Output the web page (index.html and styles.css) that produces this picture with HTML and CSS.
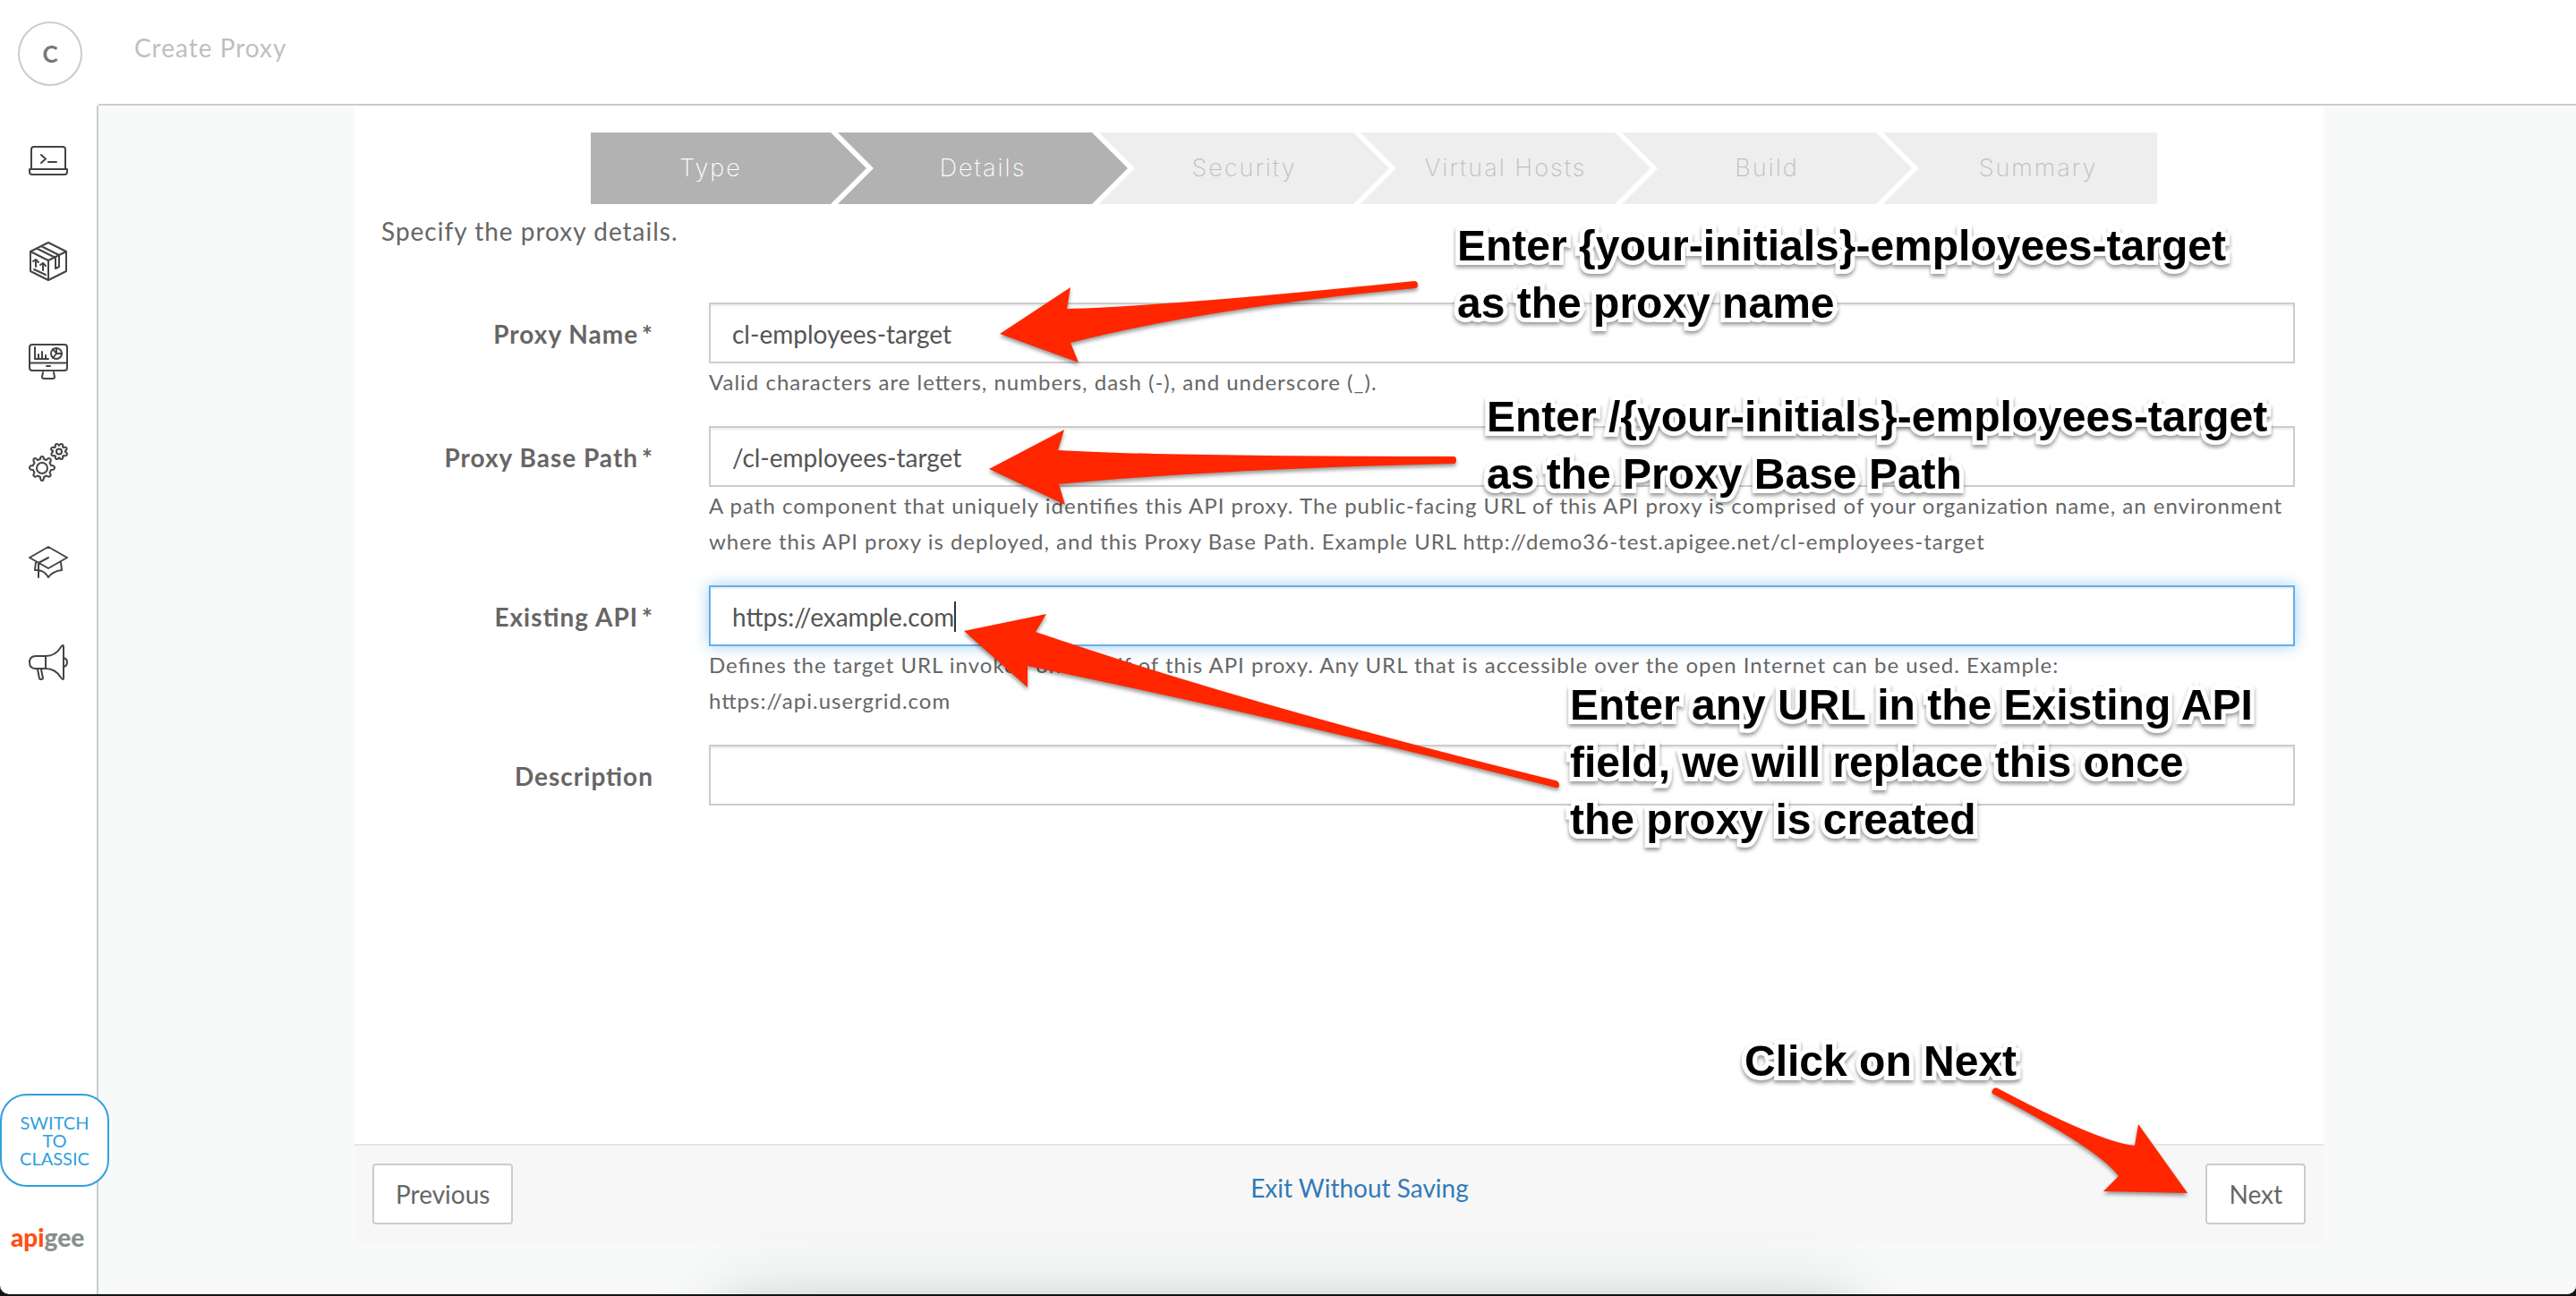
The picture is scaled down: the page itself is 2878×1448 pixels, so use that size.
FILE: index.html
```html
<!DOCTYPE html>
<html lang="en">
<head>
<meta charset="utf-8">
<title>Create Proxy</title>
<link rel="stylesheet" href="styles.css">
</head>
<body>
<div class="app">
  <header class="topbar">
    <div class="topbar-account"><button class="avatar" type="button">C</button></div>
    <h1 class="topbar-title">Create Proxy</h1>
  </header>

  <nav class="sidebar" aria-label="Main">
    <ul class="nav-list">
      <li><a class="nav-link" href="#develop" aria-label="Develop">
        <svg class="icon" viewBox="0 0 44 44"><path d="M3 31V9q0-3 3-3h32q3 0 3 3v22M1 31h42v3q0 3-3 3H4q-3 0-3-3z"/><path d="M14 15l5 4.500-5 4.500M22 23h9"/></svg>
      </a></li>
      <li><a class="nav-link" href="#publish" aria-label="Publish">
        <svg class="icon" viewBox="0 0 44 44"><path d="M22 1l20 10v22L22 43 2 33V11zM2 11l20 10 20-10M22 21v22M9 7.500l20 10M14 5l20 10M30 17v13l4-2V15"/><path d="M8 28v-8M5 22l3-2 3 3M16 32v-8M13 26l3-2 3 3M6 31l13 6"/></svg>
      </a></li>
      <li><a class="nav-link" href="#analyze" aria-label="Analyze">
        <svg class="icon" viewBox="0 0 44 44"><rect x="1" y="3" width="42" height="29" rx="3"/><path d="M1 23.500h42M20 27h4M16 34l-1 5q0 2 2 2h10q2 0 2-2l-1-5"/><path d="M7 6v13h15M11 19v-5M15 19v-8M19 19v-4"/><circle cx="31" cy="13" r="6"/><path d="M31 7v6h6M31 13l-4 5M31 13l-4-5"/></svg>
      </a></li>
      <li><a class="nav-link" href="#admin" aria-label="Admin">
        <svg class="icon" viewBox="0 0 44 44"><path d="M13 19q0-3 2-3t2 3l3 1q2-3 4-1.500t-.5 4.500l1.500 3q4 0 4 2.500t-4 2.500l-1.500 3q2 2.500.5 4t-4-.5l-3 1.500q0 4-2 4t-2-4l-3-1.500q-2.500 2-4 .5t.5-4L5 31q-4 0-4-2.500T5 26l1.500-3q-2-3-.5-4.500t4 1.500z"/><circle cx="15" cy="29" r="6"/><path d="M30 5q-1-2 .8-2.800t2.700 1.300h1q1-2.200 2.700-1.300T38 5l1 1q3-1 3.500 1T41 9.500v1.500q2.500 1 1.800 3T39 15l-1 1q1 2-.8 2.800t-2.700-1.300h-1q-1 2.200-2.700 1.300T30 16l-1-1q-3 1-3.500-1T27 11V9.500q-2.500-.5-1.800-2.500T29 6z"/><circle cx="34" cy="10.500" r="3"/></svg>
      </a></li>
      <li><a class="nav-link" href="#learn" aria-label="Learn">
        <svg class="icon" viewBox="0 0 44 44"><path d="M22 5l21 12-21 12L1 17zM22 17l-11 6v16M8 22l-1 9h3M11 31q7 1 11 8 5-7 15-8l-1-9"/></svg>
      </a></li>
      <li><a class="nav-link" href="#news" aria-label="Announcements">
        <svg class="icon" viewBox="0 0 44 44"><path d="M19 15H8q-7 0-7 7t7 7h11q11 0 17 10 3 4 3 0V5q0-4-3 0-6 10-17 10zM19 15v14M39 17q4 1 4 5t-4 5M10 30l2 10q0 1 1.500 1t2.500-1l-2-10"/></svg>
      </a></li>
    </ul>
    <div class="sidebar-foot">
      <button class="classic" type="button">SWITCH TO CLASSIC</button>
      <a class="logo" href="#home"><span class="logo-api">api</span>gee</a>
    </div>
  </nav>

  <main class="content">
    <section class="panel">
      <div class="panel-body">
        <ol class="steps">
          <li class="step step-first step-done">Type</li>
          <li class="step step-done">Details</li>
          <li class="step">Security</li>
          <li class="step">Virtual Hosts</li>
          <li class="step">Build</li>
          <li class="step step-last">Summary</li>
        </ol>
        <p class="intro">Specify the proxy details.</p>
        <form class="fields" id="proxy-form">
          <div class="row">
            <label class="label" for="name">Proxy Name<span class="star">*</span></label>
            <div class="control">
              <input class="input" id="name" type="text" value="cl-employees-target">
              <p class="help">Valid characters are letters, numbers, dash (-), and underscore (_).</p>
            </div>
          </div>
          <div class="row">
            <label class="label" for="path">Proxy Base Path<span class="star">*</span></label>
            <div class="control">
              <input class="input" id="path" type="text" value="/cl-employees-target">
              <p class="help">A path component that uniquely identifies this API proxy. The public-facing URL of this API proxy is comprised of your organization name, an environment where this API proxy is deployed, and this Proxy Base Path. Example URL http://demo36-test.apigee.net/cl-employees-target</p>
            </div>
          </div>
          <div class="row">
            <label class="label" for="target">Existing API<span class="star">*</span></label>
            <div class="control">
              <input class="input input-active" id="target" type="text" value="https://example.com">
              <span class="caret"></span>
              <p class="help">Defines the target URL invoked on behalf of this API proxy. Any URL that is accessible over the open Internet can be used. Example: https://api.usergrid.com</p>
            </div>
          </div>
          <div class="row">
            <label class="label" for="description">Description</label>
            <div class="control">
              <input class="input" id="description" type="text" value="">
            </div>
          </div>
        </form>
      </div>
      <footer class="panel-foot">
        <button class="btn" type="button">Previous</button>
        <a class="exit" href="#exit">Exit Without Saving</a>
        <button class="btn" type="submit" form="proxy-form">Next</button>
      </footer>

      <svg class="arrows" viewBox="396 118 2200 1270" aria-hidden="true">
        <path d="M1117 373L1196 321 1192 345Q1320 341 1580 314Q1584 314 1584 318T1581 322Q1350 344 1196 383L1205 405z"/>
        <path d="M1105 524L1189 480 1182 503Q1300 510 1624 510Q1627 510 1627 514T1624 518Q1360 524 1183 541L1190 564z"/>
        <path d="M1077 705L1169 686 1157 706Q1410 792 1738 872Q1742 873 1742 877T1738 880Q1430 802 1148 744L1148 768z"/>
        <path d="M2444 1333L2389 1256 2385 1280Q2345 1276 2232 1216Q2228 1214 2226 1218T2228 1223Q2345 1284 2367 1314L2350 1331z"/>
      </svg>
      <p class="note note-name">Enter {your-initials}-employees-target<br>as the proxy name</p>
      <p class="note note-path">Enter /{your-initials}-employees-target<br>as the Proxy Base Path</p>
      <p class="note note-target">Enter any URL in the Existing API<br>field, we will replace this once<br>the proxy is created</p>
      <p class="note note-next">Click on Next</p>
    </section>
  </main>
  <div class="dock-shadow"></div>
</div>
</body>
</html>
```
FILE: styles.css
```css
* { box-sizing: border-box; }

body {
  margin: 0;
  background: #141416;
  color: #666;
  font: 28px/40px Lato, "Open Sans", sans-serif;
  font-feature-settings: "liga";
}

h1, p, ol, ul { margin: 0; padding: 0; }
ol, ul { list-style: none; }
a { text-decoration: none; }
button, input { font: inherit; color: inherit; }

.app {
  position: relative;
  display: grid;
  grid-template: auto 1fr / 110px 1fr;
  min-height: calc(100vh - 2px);
  margin-bottom: 2px;
  background: #fff;
  border-radius: 0 0 10px 10px;
  overflow: hidden;
}

/* top bar */
.topbar {
  grid-column: 1 / 3;
  display: grid;
  grid-template-columns: subgrid;
  height: 118px;
}
.topbar-account { padding: 24px 0 0 20px; }
.avatar {
  display: block;
  width: 72px;
  height: 72px;
  padding: 0;
  border: 2px solid #ccc;
  border-radius: 50%;
  background: #fff;
  color: #777;
  font-size: 26px;
  font-weight: 700;
}
.topbar-title {
  padding: 33px 0 0 40px;
  border-bottom: 2px solid #ccc;
  color: #bfbfbf;
  font-size: 28px;
  font-weight: 400;
  letter-spacing: 1px;
}

/* sidebar */
.sidebar {
  display: flex;
  flex-direction: column;
  justify-content: space-between;
  padding: 40px 0 38px;
  border-right: 2px solid #c9cccb;
}
.nav-list {
  display: grid;
  gap: 68px;
  justify-items: center;
}
.nav-link { display: block; }
.icon {
  display: block;
  width: 44px;
  height: 44px;
  fill: none;
  stroke: #444;
  stroke-width: 2;
  stroke-linejoin: round;
  stroke-linecap: round;
}
.sidebar-foot {
  position: relative;
  z-index: 1;
  display: grid;
  gap: 30px;
}
.classic {
  width: 122px;
  height: 104px;
  padding: 0 18px;
  border: 2px solid #2f9fdc;
  border-radius: 30px;
  background: #fff;
  color: #2f9fdc;
  font-size: 20px;
  line-height: 20px;
}
.logo {
  padding-left: 12px;
  color: #8a8f8d;
  font: 900 28px/52px Lato, sans-serif;
}
.logo-api { color: #ff4f12; }

/* wizard panel */
.content {
  display: flex;
  justify-content: center;
  padding: 0 0 58px 4px;
  background: #f8faf9;
}
.panel {
  position: relative;
  display: flex;
  flex-direction: column;
  width: 100%;
  max-width: 2200px;
  background: #fff;
}
.panel-body {
  flex: 1;
  padding: 30px 32px 60px 30px;
}
.steps {
  display: grid;
  grid-template-columns: 276fr repeat(4, 292fr) 306fr;
  margin: 0 154px 0 234px;
}
.step {
  height: 80px;
  margin-right: -32px;
  background: #eee;
  clip-path: polygon(0 0, calc(100% - 40px) 0, 100% 50%, calc(100% - 40px) 100%, 0 100%, 40px 50%);
  color: #bebebe;
  font: 200 27px/80px Inter, "Liberation Sans", sans-serif;
  letter-spacing: 2px;
  text-align: center;
}
.step-done {
  background: #b2b2b2;
  color: #fff;
}
.step-first {
  padding-right: 40px;
  clip-path: polygon(0 0, calc(100% - 40px) 0, 100% 50%, calc(100% - 40px) 100%, 0 100%);
}
.step-last {
  margin-right: 0;
  padding-left: 40px;
  clip-path: polygon(0 0, 100% 0, 100% 100%, 0 100%, 40px 50%);
}
.intro {
  margin: 10px 0 60px;
  letter-spacing: 1px;
}

/* form */
.fields {
  display: grid;
  gap: 30px;
}
.row {
  display: grid;
  grid-template-columns: 304px 1fr;
  gap: 62px;
}
.label {
  padding-top: 15px;
  font-weight: 700;
  letter-spacing: 1px;
  text-align: right;
}
.star { margin-left: 4px; }
.control { position: relative; }
.input {
  display: block;
  width: 100%;
  height: 68px;
  padding: 2px 24px 0;
  border: 2px solid #ccc;
  border-radius: 0;
  outline: 0;
  background: #fff;
  box-shadow: inset 0 2px 2px rgba(0, 0, 0, .075);
  color: #555;
}
.input-active {
  border-color: #66afe9;
  box-shadow: inset 0 2px 2px rgba(0, 0, 0, .075), 0 0 16px rgba(102, 175, 233, .6);
}
.caret {
  position: absolute;
  top: 18px;
  left: 274px;
  width: 2px;
  height: 34px;
  background: #333;
}
.help {
  margin: 1px 0 -1px;
  font-size: 24px;
  letter-spacing: 1px;
}

/* panel footer */
.panel-foot {
  display: flex;
  justify-content: space-between;
  align-items: flex-start;
  padding: 20px;
  border-top: 2px solid #e7e7e7;
  background: #f7f7f7;
}
.btn {
  height: 68px;
  padding: 0 24px;
  border: 2px solid #ccc;
  border-radius: 4px;
  background: #fff;
}
.exit {
  padding-top: 7px;
  color: #337ab7;
}

/* walkthrough callouts over the form */
.arrows {
  position: absolute;
  top: 0;
  left: 0;
  width: 100%;
  fill: #ff2600;
  filter: drop-shadow(0 3px 2px rgba(0, 0, 0, .4));
  pointer-events: none;
}
.note {
  position: absolute;
  color: #000;
  font: 700 48px/64px "Liberation Sans", Arial, sans-serif;
  white-space: nowrap;
  -webkit-text-stroke: 10px #fff;
  stroke-linejoin: round;
  paint-order: stroke fill;
  filter: drop-shadow(0 3px 2px rgba(0, 0, 0, .4));
  pointer-events: none;
}
.note-name { top: 125px; left: 1232px; }
.note-path { top: 316px; left: 1265px; }
.note-target { top: 638px; left: 1358px; }
.note-next { top: 1036px; left: 1553px; }

/* shade cast by the dock below the window */
.dock-shadow {
  position: absolute;
  top: 100%;
  left: 28%;
  right: 28%;
  height: 100px;
  box-shadow: 0 0 30px rgba(0, 0, 0, .06), 0 0 90px rgba(0, 0, 0, .12);
  pointer-events: none;
}
```
